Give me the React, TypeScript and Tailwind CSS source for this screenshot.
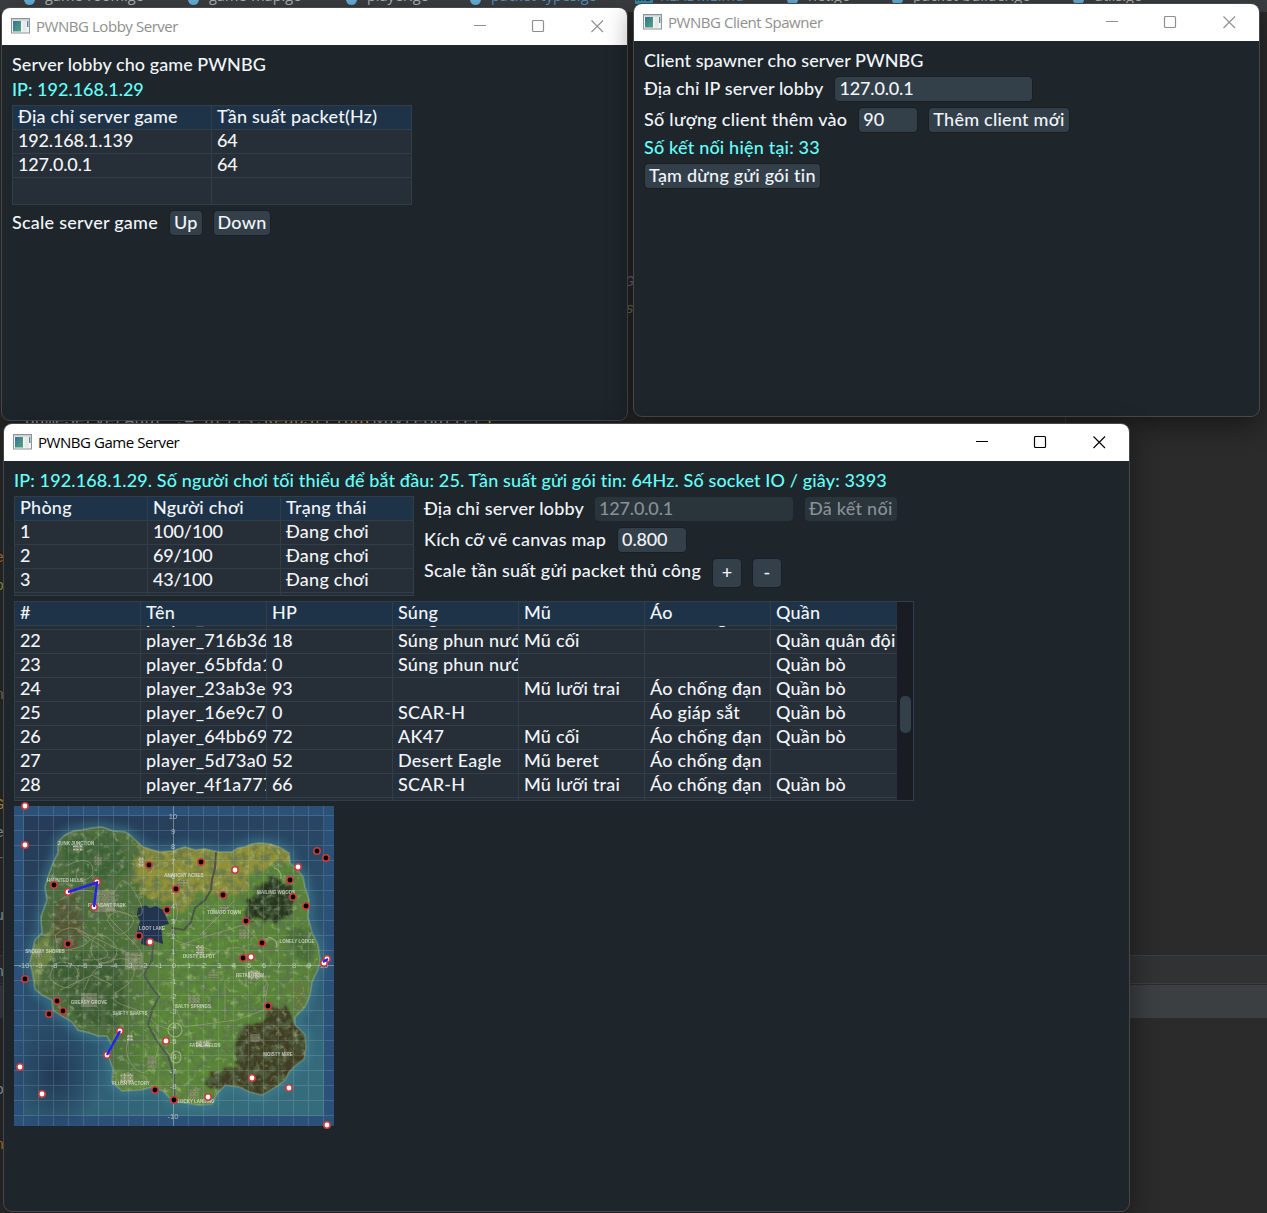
import React from "react";

const BASE = "mb-0.5 whitespace-pre font-['Lato',sans-serif] text-[18px] font-medium leading-[18px]";

function T({ children, className = "", spacing }: { children?: React.ReactNode; className?: string; spacing?: string }) {
  const numeric = typeof children === "string" && /^[\d./]+$/.test(children);
  const tracking = spacing ?? (numeric ? "tracking-[-0.15px]" : "tracking-[0.24px]");
  return <span className={`${BASE} ${tracking} ${className}`}>{children}</span>;
}

function AppIcon() {
  return (
    <svg width="19" height="16" viewBox="0 0 19 16" className="shrink-0">
      <defs>
        <linearGradient id="appicon" x1="0" y1="0" x2="1" y2="1">
          <stop offset="0" stopColor="#3b6f9c" />
          <stop offset="1" stopColor="#4fa777" />
        </linearGradient>
      </defs>
      <rect x="0.5" y="0.5" width="18" height="14.5" fill="#f4f4f4" stroke="#8f9498" />
      <rect x="1" y="1" width="17" height="1.6" fill="#c9cdd0" />
      <rect x="2" y="3" width="8" height="10.5" fill="url(#appicon)" />
      <rect x="11.5" y="3" width="4" height="10.5" fill="#e6e8ea" />
      <rect x="16" y="3" width="1.4" height="6" fill="#4f8f92" />
    </svg>
  );
}

function Window({
  title,
  active = false,
  className,
  children,
}: {
  title: string;
  active?: boolean;
  className: string;
  children: React.ReactNode;
}) {
  return (
    <section
      className={`absolute flex flex-col overflow-hidden rounded-[9px] border border-[#48484a] bg-[#1e262c] shadow-[0_8px_28px_rgba(0,0,0,0.45)] ${className}`}
    >
      <header
        className={`flex h-[37px] shrink-0 items-center bg-white pb-0.5 pl-[9px] ${active ? "text-black" : "text-[#8f8f8f]"}`}
      >
        <AppIcon />
        <h1 className="ml-[6px] whitespace-pre font-['Open_Sans',sans-serif] text-[15px] leading-5 tracking-[-0.45px]">
          {title}
        </h1>
        <svg className="ml-auto mr-[23px] shrink-0" width="130" height="14" viewBox="0 0 130 14" fill="none" stroke="currentColor">
          <path d="M0 6.5H12" />
          <rect x="58.5" y="1.5" width="11" height="11" rx="1" strokeWidth="1.2" />
          <path d="M117.5 1.5L129 13M129 1.5L117.5 13" strokeWidth="1.1" />
        </svg>
      </header>
      <div className="flex grow flex-col items-start px-[10px] text-[#f2f5fa]">{children}</div>
    </section>
  );
}

function Btn({ children, className = "", disabled = false }: { children: React.ReactNode; className?: string; disabled?: boolean }) {
  return (
    <button
      className={`flex items-center rounded-[4px] px-1 ${
        disabled ? "bg-[#29343b] text-[#8a9096]" : "bg-[#33404a] shadow-[0_0_0_1px_#182026]"
      } ${className}`}
    >
      <T>{children}</T>
    </button>
  );
}

function Row({
  cells,
  columns,
  header = false,
  className = "h-6",
}: {
  cells: string[];
  columns: string;
  header?: boolean;
  className?: string;
}) {
  return (
    <div className={`grid ${columns} shrink-0 overflow-hidden border-b border-[#2f3e48] ${header ? "bg-[#1e3348]" : "bg-[#262e37]"} ${className}`}>
      {cells.map((c, i) => (
        <div key={i} className="flex items-start overflow-hidden border-r border-[#2f3e48] pl-[5px] last:border-r-0">
          <T className="pt-px">{c}</T>
        </div>
      ))}
    </div>
  );
}

const PLAYERS = [
  ["22", "player_716b36", "18", "Súng phun nước", "Mũ cối", "", "Quần quân đội"],
  ["23", "player_65bfda1", "0", "Súng phun nước", "", "", "Quần bò"],
  ["24", "player_23ab3e", "93", "", "Mũ lưỡi trai", "Áo chống đạn", "Quần bò"],
  ["25", "player_16e9c7", "0", "SCAR-H", "", "Áo giáp sắt", "Quần bò"],
  ["26", "player_64bb69", "72", "AK47", "Mũ cối", "Áo chống đạn", "Quần bò"],
  ["27", "player_5d73a0", "52", "Desert Eagle", "Mũ beret", "Áo chống đạn", ""],
  ["28", "player_4f1a777", "66", "SCAR-H", "Mũ lưỡi trai", "Áo chống đạn", "Quần bò"],
];

const COLS2 = "grid-cols-[199px_199px]";
const COLS3 = "grid-cols-[133px_133px_132px]";
const COLS7 = "grid-cols-[126px_126px_126px_126px_126px_126px_126px]";

const ISLAND =
  "M65 835L74 831 82 830 92 828 102 827 113 831 125 832 130 835 135 840 143 847 152 850 160 852 172 851 185 847 195 850 205 849 218 852 232 852 238 848 245 847 252 844 260 843 270 844 279 847 289 853 290 863 295 868 299 872 303 877 305 887 309 900 308 917 312 933 318 945 320 960 318 969 312 982 310 995 305 1007 295 1017 295 1025 305 1035 306 1048 304 1059 296 1065 289 1072 285 1080 279 1085 262 1095 250 1092 239 1087 225 1085 217 1094 212 1104 199 1105 179 1102 172 1100 163 1091 153 1087 140 1090 122 1091 112 1082 113 1069 108 1055 112 1045 107 1036 98 1036 90 1033 78 1030 72 1022 62 1016 53 1010 52 1000 42 995 35 989 33 975 30 962 35 940 42 933 41 917 47 900 45 887 48 877 53 863 58 853 58 842Z";

const ALIVE = [
  [25, 806], [25, 845], [97, 882], [68, 892], [94, 907], [150, 942], [235, 870], [298, 867], [251, 957],
  [327, 959], [324, 963], [120, 1031], [107, 1055], [166, 1041], [20, 1067], [42, 1094], [252, 1078],
  [289, 1088], [208, 1097], [327, 1125],
];
const DEAD = [
  [54, 885], [149, 865], [201, 862], [167, 910], [176, 889], [139, 936], [68, 944], [317, 851], [326, 858],
  [290, 880], [293, 897], [306, 906], [223, 895], [246, 921], [262, 943], [243, 958], [268, 1006], [25, 979],
  [57, 1001], [49, 1014], [63, 1011], [155, 1090], [174, 1100],
];
const PLACES: [string, number, number][] = [
  ["JUNK JUNCTION", 76, 845], ["HAUNTED HILLS", 65, 882], ["PLEASANT PARK", 107, 907], ["LOOT LAKE", 152, 930],
  ["ANARCHY ACRES", 184, 877], ["WAILING WOODS", 276, 894], ["TOMATO TOWN", 224, 914], ["LONELY LODGE", 297, 943],
  ["DUSTY DEPOT", 199, 958], ["SNOBBY SHORES", 45, 953], ["RETAIL ROW", 250, 977], ["GREASY GROVE", 89, 1004],
  ["SHIFTY SHAFTS", 130, 1015], ["SALTY SPRINGS", 193, 1008], ["FATAL FIELDS", 205, 1047], ["MOISTY MIRE", 278, 1056],
  ["FLUSH FACTORY", 131, 1085], ["LUCKY LANDING", 196, 1103],
];
const TOWNS = [
  [78, 848, 10, 6], [105, 901, 20, 22], [98, 861, 7, 8], [141, 862, 5, 9], [134, 961, 18, 17], [89, 1000, 16, 14], [200, 950, 8, 10],
  [224, 908, 9, 6], [244, 934, 10, 9], [254, 975, 12, 9], [255, 1038, 9, 8], [152, 1062, 9, 12], [127, 1078, 13, 9],
  [194, 1094, 9, 9], [213, 975, 9, 6], [203, 1044, 14, 7], [183, 883, 11, 6], [39, 953, 6, 9], [130, 1038, 6, 6], [194, 999, 12, 8],
];
const TICKS = [-10, -9, -8, -7, -6, -5, -4, -3, -2, -1, 0, 1, 2, 3, 4, 5, 6, 7, 8, 9, 10];

function GameMap() {
  return (
    <svg width="320" height="320" viewBox="14 806 320 320" className="mt-[5px] shrink-0 overflow-visible">
      <defs>
        <linearGradient id="sea" x1="0.2" y1="0" x2="0.6" y2="1">
          <stop offset="0" stopColor="#263c58" />
          <stop offset="0.55" stopColor="#2a4f6d" />
          <stop offset="1" stopColor="#356c7c" />
        </linearGradient>
        <linearGradient id="land" x1="0" y1="0" x2="1" y2="0.15">
          <stop offset="0" stopColor="#48673b" />
          <stop offset="0.4" stopColor="#4d7038" />
          <stop offset="0.55" stopColor="#5b8a35" />
          <stop offset="1" stopColor="#5a8438" />
        </linearGradient>
        <radialGradient id="deep">
          <stop offset="0" stopColor="#203350" stopOpacity="0.85" />
          <stop offset="1" stopColor="#203350" stopOpacity="0" />
        </radialGradient>
        <clipPath id="mapbox"><rect x="14" y="806" width="320" height="320" /></clipPath>
        <clipPath id="island"><path d={ISLAND} /></clipPath>
        <filter id="soft" x="-20%" y="-20%" width="140%" height="140%"><feGaussianBlur stdDeviation="4" /></filter>
        <filter id="rough" x="-10%" y="-10%" width="120%" height="120%">
          <feTurbulence type="fractalNoise" baseFrequency="0.09" numOctaves="3" seed="4" result="n" />
          <feDisplacementMap in="SourceGraphic" in2="n" scale="14" xChannelSelector="R" yChannelSelector="G" />
          <feGaussianBlur stdDeviation="0.9" />
        </filter>
        <filter id="dark" x="0" y="0" width="100%" height="100%">
          <feTurbulence type="fractalNoise" baseFrequency="0.13" numOctaves="4" seed="9" />
          <feColorMatrix values="0 0 0 0 0.1  0 0 0 0 0.16  0 0 0 0 0.08  3 0 0 0 -1.15" />
        </filter>
        <filter id="light" x="0" y="0" width="100%" height="100%">
          <feTurbulence type="fractalNoise" baseFrequency="0.16" numOctaves="4" seed="21" />
          <feColorMatrix values="0 0 0 0 0.62  0 0 0 0 0.7  0 0 0 0 0.4  0 3 0 0 -1.7" />
        </filter>
      </defs>
      <g clipPath="url(#mapbox)">
        <rect x="14" y="806" width="320" height="320" fill="#2b5178" />
        <rect x="24" y="816" width="300" height="300" fill="url(#sea)" />
        <ellipse cx="55" cy="1075" rx="45" ry="60" fill="url(#deep)" />
        <path d={ISLAND} fill="none" stroke="#438596" strokeWidth="10" opacity="0.55" filter="url(#soft)" />
        <path d={ISLAND} fill="none" stroke="#6f9a94" strokeWidth="2" opacity="0.6" />
        <g clipPath="url(#island)">
          <path d={ISLAND} fill="url(#land)" />
          <g filter="url(#rough)">
            <path d="M128 826L140 850 131 872 138 893 150 899 166 900 178 912 192 902 200 890 226 897 246 891 252 875 268 867 291 858 280 838 230 836 160 840Z" fill="#8f9038" />
            <path d="M262 880L275 878 292 887 297 900 290 914 275 924 262 919 250 921 245 907 250 893Z" fill="#27361b" />
            <path d="M272 1008L286 1003 293 1020 312 1030 308 1065 283 1082 262 1100 238 1090 206 1088 208 1075 236 1068 240 1030 256 1026Z" fill="#403d20" />
            <path d="M54 905L76 896 84 916 78 945 60 950 50 932Z" fill="#5b4a2e" opacity="0.6" />
            <path d="M60 840L118 834 126 870 108 880 70 876Z" fill="#345a31" opacity="0.6" />
            <path d="M30 945L50 930 52 956 38 985 28 975Z" fill="#7a8f45" opacity="0.8" />
            <path d="M46 960L120 950 128 1005 106 1030 76 1020Z" fill="#31542c" opacity="0.6" />
            <path d="M115 1070L170 1080 213 1090 208 1108 112 1092Z" fill="#668b3a" opacity="0.7" />
            <path d="M285 925L312 930 313 960 296 960Z" fill="#33592b" opacity="0.55" />
          </g>
          <rect x="14" y="806" width="320" height="320" filter="url(#dark)" opacity="0.65" />
          <rect x="14" y="806" width="320" height="320" filter="url(#light)" opacity="0.45" />
          <path d="M138 908L146 905 150 908 156 906 163 910 169 924 161 926 163 944 152 940 148 946 141 944 142 934 137 932 140 921 137 915Z" fill="#223450" />
          <g fill="none" stroke="#a3a17c" strokeWidth="1" opacity="0.6">
            <path d="M68 865Q88 855 92 866T84 880 78 868M60 900Q80 885 96 893T118 886 138 898 120 912 126 935 110 945 92 940 82 960" />
            <path d="M55 935Q70 922 84 932T76 948 57 944ZM50 975Q54 958 68 963T77 980 60 986 50 975M84 990Q92 965 112 960T134 968 120 990 126 1006 152 1020 173 1030" />
            <path d="M92 942Q96 930 108 938T116 956 100 962 92 942M107 920Q113 908 126 913T130 928 116 932 107 920M133 1030Q120 1050 132 1065T152 1065 158 1040 146 1028" />
            <path d="M172 960L172 1000 184 1027 236 1020 264 1010 268 984 250 965M180 945L210 935 244 925 262 945M200 935L235 900M225 980V1020" />
            <path d="M172 895Q182 910 174 925T186 944 210 950M226 950Q238 945 246 950V985M60 990L92 975 112 985" />
          </g>
          <path d="M216 852L215 868 212 880 211 890 205 900 195 908 191 922 184 930 172 928" fill="none" stroke="#4c5348" strokeWidth="2" />
          <path d="M153 944L152 960 144 975 150 985 159 997 152 1010 148 1025 156 1040 168 1056 174 1075 174 1102" fill="none" stroke="#4c5a50" strokeWidth="2" />
          <g fill="none" stroke="#6e7640" strokeWidth="1.4">
            <circle cx="299" cy="990" r="6" /><circle cx="299" cy="990" r="3" /><circle cx="299" cy="1001" r="5.5" /><circle cx="299" cy="1001" r="2.4" />
          </g>
          <g fill="none" stroke="#b5bd91" strokeWidth="1.2" opacity="0.75">
            <ellipse cx="175" cy="1030" rx="7" ry="7" /><ellipse cx="176" cy="1057" rx="5" ry="6" /><path d="M274 868Q282 870 281 879M268 937Q279 940 276 948" />
          </g>
          {TOWNS.map(([x, y, w, h], i) => (
            <g key={i} opacity="0.75">
              <rect x={x - w / 2} y={y - h / 2} width={w} height={h} fill="#a3a28c" opacity="0.65" />
              <path
                d={`M${x - w / 2} ${y - h / 4}H${x + w / 2}M${x - w / 2} ${y + h / 4}H${x + w / 2}M${x - w / 5} ${y - h / 2}V${y + h / 2}M${x + w / 4} ${y - h / 2}V${y + h / 2}`}
                stroke={i % 3 === 0 ? "#e0ddd0" : "#6c6b55"}
                strokeDasharray="2 1.5"
              />
            </g>
          ))}
          <path d={ISLAND} fill="none" stroke="#a9b58c" strokeWidth="1.4" opacity="0.5" />
        </g>
        <g stroke="#b7d3dc" strokeWidth="1" opacity="0.18">
          {TICKS.map((t) => (
            <path key={t} d={`M${173.5 + t * 15} 806V1126M14 ${965.5 + t * 15}H334`} />
          ))}
        </g>
        <path d="M173.5 806V1126M14 965.5H334" stroke="#c7d7d9" opacity="0.35" />
        <g fill="#d2dada" opacity="0.75" fontSize="7.5" fontFamily="Liberation Sans, sans-serif" textAnchor="middle">
          {TICKS.map((t) => (
            <text key={`x${t}`} x={174 + t * 15} y="968">{t}</text>
          ))}
          {TICKS.filter((t) => t !== 0).map((t) => (
            <text key={`y${t}`} x="173" y={968.5 - t * 15}>{t}</text>
          ))}
        </g>
        <g fill="#eef2ea" opacity="0.7" fontSize="4.5" fontWeight="700" fontFamily="Liberation Sans, sans-serif" textAnchor="middle">
          {PLACES.map(([name, x, y]) => (
            <text key={name} x={x} y={y}>{name}</text>
          ))}
        </g>
      </g>
      <g stroke="#c93c3c" strokeWidth="1.6">
        {DEAD.map(([x, y], i) => (
          <circle key={i} cx={x} cy={y} r="3.2" fill="#000" />
        ))}
        {ALIVE.map(([x, y], i) => (
          <circle key={i} cx={x} cy={y} r="3.2" fill="#fff" />
        ))}
      </g>
      <path d="M68 892L97 882.5 94 907M107 1055L120 1031M323 962L328 959" fill="none" stroke="#2222f5" strokeWidth="2.4" />
    </svg>
  );
}

function Tab({ label, className, blue = false }: { label: string; className: string; blue?: boolean }) {
  return (
    <div className={`absolute -top-[14px] flex items-center gap-[10px] ${className}`}>
      <i className="mt-1.5 h-[11px] w-[11px] rounded-full bg-[#69b1dc]" />
      <span className={`whitespace-pre font-['Open_Sans',sans-serif] text-[14.5px] leading-5 ${blue ? "text-[#5d94c4]" : "text-[#b4b7b9]"}`}>{label}</span>
    </div>
  );
}

function Editor() {
  return (
    <div className="absolute inset-0 overflow-hidden bg-[#2b2b2b]">
      <div className="relative h-[12px] bg-[#3c3f41]">
        <Tab label="game-room.go" className="left-6" />
        <Tab label="game-map.go" className="left-[188px]" />
        <Tab label="player.go" className="left-[346px]" />
        <Tab label="packet-types.go" className="left-[470px]" blue />
        <div className="absolute -top-[10px] left-[635px] h-[14px] w-[18px] bg-[#3c8dab] text-center font-['Open_Sans',sans-serif] text-[10px] font-bold leading-[14px] text-[#203038]">MD</div>
        <span className="absolute -top-[14px] left-[660px] font-['Open_Sans',sans-serif] text-[14.5px] leading-5 text-[#5d94c4]">README.md</span>
        <Tab label="net.go" className="left-[787px]" />
        <Tab label="packet-builder.go" className="left-[892px]" />
        <Tab label="utils.go" className="left-[1073px]" />
      </div>
      <div className="absolute left-[1065px] top-[12px] h-[943px] w-px bg-[#3c3c3c]" />
      <div className="absolute left-0 top-[955px] h-[29px] w-full border-y border-[#3d3e40] bg-[#313234]" />
      <div className="absolute left-0 top-[985px] h-[33px] w-full bg-[#3b3f41]" />
      <div className="absolute -left-[5px] top-0 font-['Liberation_Mono',monospace] text-[15px] leading-5">
        <span className="absolute top-[549px] text-[#cc7832]">e</span>
        <span className="absolute top-[577px] text-[#8fa04e]">o</span>
        <span className="absolute top-[686px] text-[#8a7a5c]">n</span>
        <span className="absolute top-[796px] text-[#c9963c]">G</span>
        <span className="absolute top-[824px] text-[#9aa5b1]">e</span>
        <span className="absolute top-[852px] text-[#8a7a5c]">r</span>
        <span className="absolute top-[907px] text-[#9aa5b1]">u</span>
        <span className="absolute top-[935px] text-[#c9963c]">,</span>
        <span className="absolute top-[963px] text-[#9aa5b1]">n</span>
        <span className="absolute top-[1081px] text-[#9aa5b1]">o</span>
        <span className="absolute top-[1136px] text-[#cc7832]">n</span>
      </div>
      <div className="absolute left-[625px] top-0 font-['Liberation_Mono',monospace] text-[15px] italic leading-5">
        <span className="absolute top-[273px] text-[#8a6596]">G</span>
        <span className="absolute top-[300px] text-[#6a8759]">s</span>
      </div>
    </div>
  );
}

export default function App() {
  return (
    <main className="relative h-[1213px] w-[1267px] overflow-hidden bg-[#2b2b2b]">
      <Editor />

      <Window title="PWNBG Lobby Server" className="left-[1px] top-[7px] h-[414px] w-[627px]">
        <div className="mt-[10px] flex h-5"><T spacing="tracking-[0.06px]">Server lobby cho game PWNBG</T></div>
        <div className="mt-[5px] flex h-5 text-[#66fffa]"><T spacing="tracking-[0px]">IP: 192.168.1.29</T></div>
        <div className="mt-[5px] w-[400px] border border-[#2f3e48]">
          <Row header columns={COLS2} cells={["Địa chỉ server game", "Tần suất packet(Hz)"]} />
          <Row columns={COLS2} cells={["192.168.1.139", "64"]} />
          <Row columns={COLS2} cells={["127.0.0.1", "64"]} />
          <Row columns={COLS2} cells={["", ""]} className="h-[26px] border-b-0" />
        </div>
        <div className="mt-[6px] flex h-6 items-center">
          <T className="mr-3">Scale server game</T>
          <Btn className="mr-3 h-6">Up</Btn>
          <Btn className="h-6">Down</Btn>
        </div>
      </Window>

      <Window title="PWNBG Client Spawner" className="left-[633px] top-[3px] h-[414px] w-[627px]">
        <div className="mt-[10px] flex h-5"><T spacing="tracking-[0.06px]">Client spawner cho server PWNBG</T></div>
        <div className="mt-[6px] flex h-6 items-center">
          <T className="mr-3" spacing="tracking-[0.13px]">Địa chỉ IP server lobby</T>
          <Btn className="h-6 w-[197px]">127.0.0.1</Btn>
        </div>
        <div className="mt-[7px] flex h-6 items-center">
          <T className="mr-3" spacing="tracking-[0.28px]">Số lượng client thêm vào</T>
          <Btn className="mr-3 h-6 w-[58px]">90</Btn>
          <Btn className="h-6">Thêm client mới</Btn>
        </div>
        <div className="mt-[6px] flex h-5 text-[#66fffa]"><T spacing="tracking-[0.19px]">Số kết nối hiện tại: 33</T></div>
        <Btn className="ml-px mt-[6px] h-6">Tạm dừng gửi gói tin</Btn>
      </Window>

      <div className="absolute left-[25px] top-[421px] h-[3px] w-[600px] overflow-hidden">
        <code className="-mt-[10px] block whitespace-pre font-['Liberation_Mono',monospace] text-[16.6px] leading-5 text-[#7d8894]">
          gameServerAddr := <em className="text-[#8f7a50]">utils</em>.<span className="text-[#9a8157]">ReadString</span>
          <span className="text-[#b39b2e]">(</span>&amp;byteBuffer<span className="text-[#b39b2e]">)</span>
        </code>
      </div>

      <Window title="PWNBG Game Server" active className="left-[3px] top-[423px] h-[789px] w-[1127px]">
        <div className="mt-[10px] flex h-5 text-[#66fffa]">
          <T spacing="tracking-[0.125px]">IP: 192.168.1.29. Số người chơi tối thiểu để bắt đầu: 25. Tần suất gửi gói tin: 64Hz. Số socket IO / giây: 3393</T>
        </div>
        <div className="mt-[5px] flex gap-[10px]">
          <div className="h-[100px] w-[400px] overflow-hidden border border-[#2f3e48]">
            <Row header columns={COLS3} cells={["Phòng", "Người chơi", "Trạng thái"]} />
            <Row columns={COLS3} cells={["1", "100/100", "Đang chơi"]} />
            <Row columns={COLS3} cells={["2", "69/100", "Đang chơi"]} />
            <Row columns={COLS3} cells={["3", "43/100", "Đang chơi"]} />
            <Row columns={COLS3} cells={["", "", ""]} className="h-[2px] border-b-0" />
          </div>
          <div className="flex flex-col">
            <div className="mt-px flex h-6 items-center">
              <T className="mr-[11px]" spacing="tracking-[0.18px]">Địa chỉ server lobby</T>
              <Btn disabled className="mr-3 h-6 w-[198px]">127.0.0.1</Btn>
              <Btn disabled className="h-6">Đã kết nối</Btn>
            </div>
            <div className="mt-[7px] flex h-6 items-center">
              <T className="mr-3" spacing="tracking-[0.2px]">Kích cỡ vẽ canvas map</T>
              <Btn className="h-6 w-[68px]">0.800</Btn>
            </div>
            <div className="mt-[7px] flex h-7 items-start">
              <T className="mr-3 mt-0.5" spacing="tracking-[0.21px]">Scale tần suất gửi packet thủ công</T>
              <Btn className="mr-3 h-7 w-7 justify-center">+</Btn>
              <Btn className="h-7 w-7 justify-center">-</Btn>
            </div>
          </div>
        </div>
        <div className="mt-[5px] flex h-[200px] w-[900px] overflow-hidden border border-[#2f3e48]">
          <div className="flex w-[882px] flex-col overflow-hidden">
            <Row header columns={COLS7} cells={["#", "Tên", "HP", "Súng", "Mũ", "Áo", "Quần"]} />
            <div className={`grid ${COLS7} h-1 shrink-0 overflow-hidden border-b border-[#2f3e48] bg-[#262e37]`}>
              {["", "player_", "", "Súng", "", "Áo chống", ""].map((c, i) => (
                <div key={i} className="-mt-[18px] flex h-6 items-start overflow-hidden border-r border-[#2f3e48] pl-[5px]"><T>{c}</T></div>
              ))}
            </div>
            {PLAYERS.map((p) => (
              <Row key={p[0]} columns={COLS7} cells={p} />
            ))}
            <Row columns={COLS7} cells={["", "", "", "", "", "", ""]} className="h-[2px] border-b-0" />
          </div>
          <div className="w-4 bg-[#191c23] pl-[3px] pt-[94px]">
            <div className="h-[37px] w-[11px] rounded-[5px] bg-[#33404a]" />
          </div>
        </div>
        <GameMap />
      </Window>
    </main>
  );
}
